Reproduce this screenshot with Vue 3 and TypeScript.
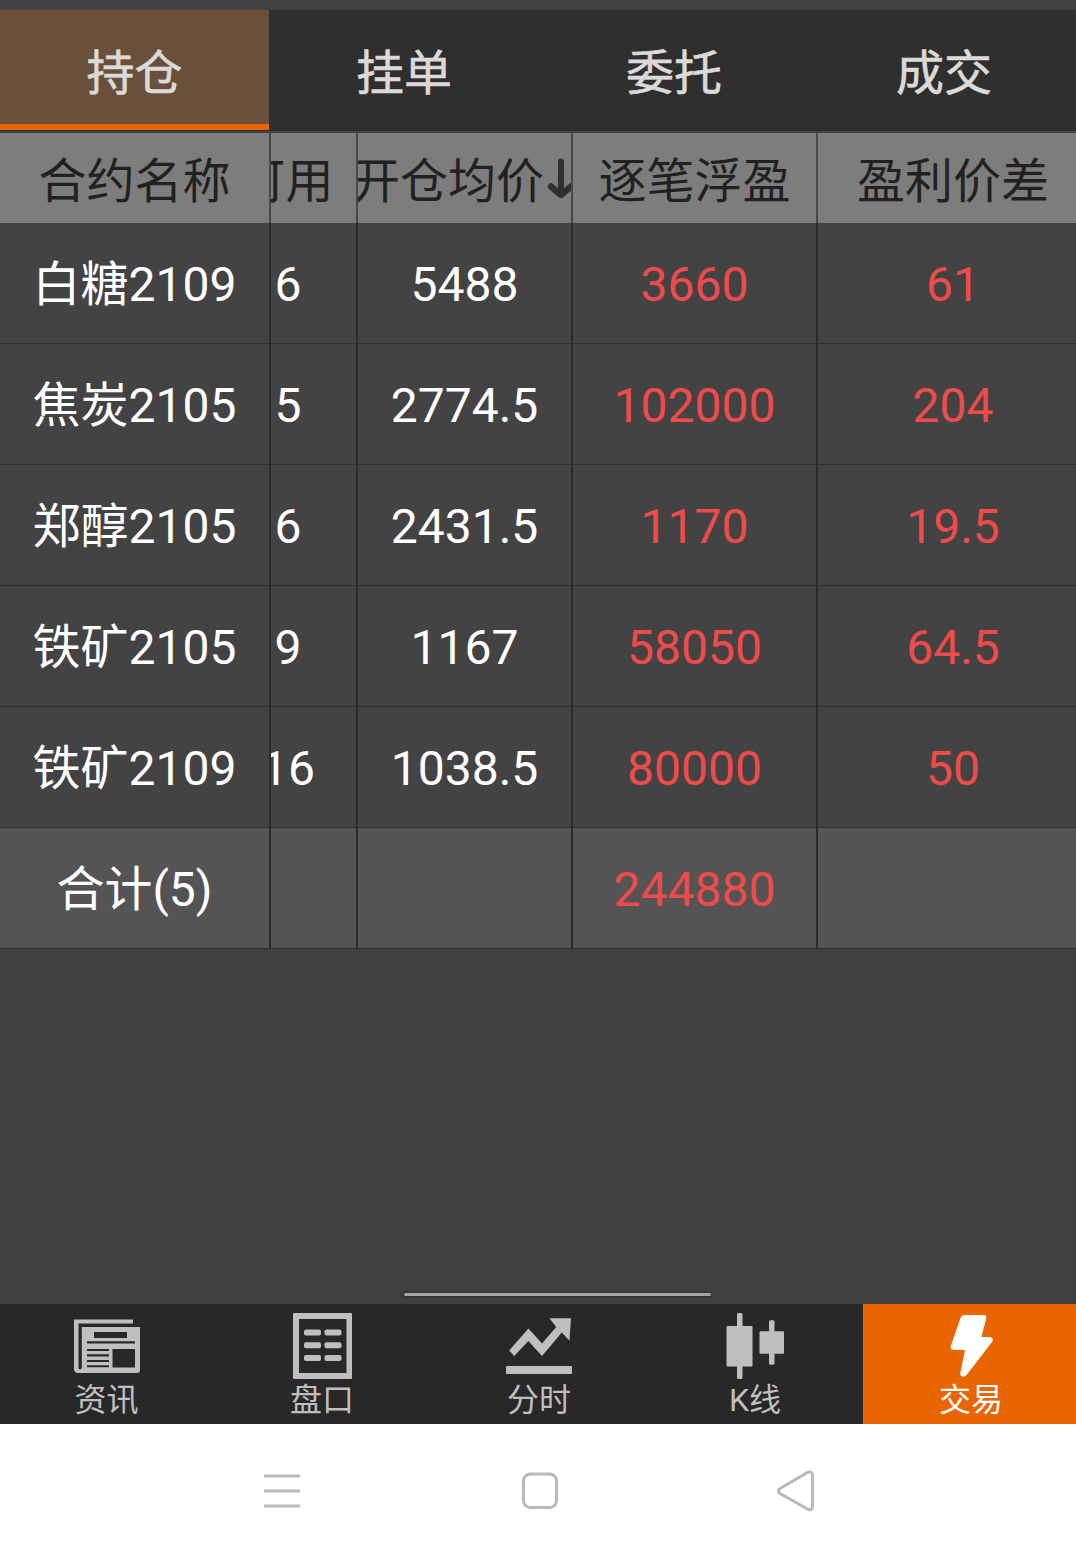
<script setup lang="ts">
const tabs: string[] = ['持仓', '挂单', '委托', '成交']

interface Row {
  name: string
  usable: string
  price: string
  profit: string
  spread: string
  total?: boolean
}

const rows: Row[] = [
  { name: '白糖2109', usable: '6', price: '5488', profit: '3660', spread: '61' },
  { name: '焦炭2105', usable: '5', price: '2774.5', profit: '102000', spread: '204' },
  { name: '郑醇2105', usable: '6', price: '2431.5', profit: '1170', spread: '19.5' },
  { name: '铁矿2105', usable: '9', price: '1167', profit: '58050', spread: '64.5' },
  { name: '铁矿2109', usable: '16', price: '1038.5', profit: '80000', spread: '50' },
  { name: '合计(5)', usable: '', price: '', profit: '244880', spread: '', total: true },
]
</script>

<template>
  <div class="screen">
    <nav class="tabs">
      <div v-for="(t, i) in tabs" :key="t" class="tab" :class="{ active: i === 0 }">{{ t }}</div>
    </nav>

    <section class="table">
      <div class="row head">
        <div class="cell"><span class="in">合约名称</span></div>
        <div class="cell usable"><span class="in">可用</span></div>
        <div class="cell">
          <span class="in sort">开仓均价
            <svg width="28" height="42" viewBox="0 0 28 42" fill="none" stroke="#303030" stroke-linecap="round" stroke-linejoin="round">
              <path d="M14 3.500V36" stroke-width="6" />
              <path d="M4 28.500L14 37L24 28.500" stroke-width="6.500" />
            </svg>
          </span>
        </div>
        <div class="cell"><span class="in">逐笔浮盈</span></div>
        <div class="cell last"><span class="in">盈利价差</span></div>
      </div>
      <div v-for="r in rows" :key="r.name" class="row" :class="{ total: r.total }">
        <div class="cell"><span class="in">{{ r.name }}</span></div>
        <div class="cell usable"><span class="in">{{ r.usable }}</span></div>
        <div class="cell"><span class="in">{{ r.price }}</span></div>
        <div class="cell red"><span class="in">{{ r.profit }}</span></div>
        <div class="cell red last"><span class="in">{{ r.spread }}</span></div>
      </div>
    </section>

    <div class="blank"><i class="handle"></i></div>

    <nav class="bottom">
      <div class="item">
        <svg width="72" height="72" viewBox="0 0 72 72" fill="#bfbfbf">
          <path d="M3 9.500H62V13.500H7.500V57.500Q7.500 59.500 9 59.500Q10.800 59.500 10.800 57.500V17H69V60Q69 63 66 63H7Q3 63 3 59Z" />
          <g fill="#282828">
            <path d="M23 22H56V28H23ZM16 31.300H64V33.600H16ZM16 39H38V41H16ZM16 44.300H38V46.500H16ZM16 50H38V52H16ZM16 55.300H38V57.300H16ZM41.500 39H64V57.500H41.500Z" />
          </g>
        </svg>
        <span>资讯</span>
      </div>
      <div class="item">
        <svg width="72" height="72" viewBox="0 0 72 72" fill="#bfbfbf">
          <path fill-rule="evenodd" d="M8 3H65Q66 3 66 4V68Q66 69 65 69H8Q7 69 7 68V4Q7 3 8 3ZM13 9V63H60.500V9Z" />
          <g>
            <rect x="18" y="19.500" width="17" height="6" rx="2" /><rect x="38.500" y="19.500" width="17" height="6" rx="2" />
            <rect x="18" y="32.300" width="17" height="6" rx="2" /><rect x="38.500" y="32.300" width="17" height="6" rx="2" />
            <rect x="18" y="45" width="17" height="6" rx="2" /><rect x="38.500" y="45" width="17" height="6" rx="2" />
          </g>
        </svg>
        <span>盘口</span>
      </div>
      <div class="item">
        <svg width="72" height="72" viewBox="0 0 72 72" fill="#bfbfbf">
          <path d="M6.200 40.500L25.400 18.500L39 33.500L53.200 17L46.500 8.200H68L66.500 30.700L58.800 22.500L39 46L25.400 31L11.200 46Z" />
          <rect x="3" y="56" width="66" height="8" rx="1" />
        </svg>
        <span>分时</span>
      </div>
      <div class="item">
        <svg width="72" height="72" viewBox="0 0 72 72" fill="#bfbfbf">
          <rect x="7.500" y="16" width="26" height="40.500" rx="1" /><rect x="18" y="3" width="5.500" height="66" rx="1.500" />
          <rect x="40.500" y="21.300" width="24.500" height="22.500" rx="1" /><rect x="50" y="10.300" width="5.500" height="44.500" rx="1.500" />
        </svg>
        <span>K线</span>
      </div>
      <div class="item on">
        <svg width="72" height="72" viewBox="0 0 72 72" fill="#fff">
          <path d="M32 5H50.500Q54 5 53.200 8.500L48.500 27H57Q61.500 28 59 32L34 64.500Q30 69 27 64.500L32 40H20.500Q17 39.500 17.800 36L27.500 8Q28.800 5 32 5Z" />
        </svg>
        <span>交易</span>
      </div>
    </nav>

    <footer class="system">
      <svg width="40" height="40" viewBox="0 0 40 40" stroke="#b9b9b9" stroke-width="3"><path d="M2 5H38M2 20H38M2 35H38" /></svg>
      <svg width="40" height="40" viewBox="0 0 40 40" fill="none" stroke="#b9b9b9" stroke-width="3"><rect x="4.500" y="3" width="33" height="33.500" rx="7" /></svg>
      <svg width="40" height="44" viewBox="0 0 40 44" fill="none" stroke="#b9b9b9" stroke-width="3"><path d="M4 19.500L31.500 3.500Q36.200 2 36.500 6V38Q36.200 42 31.500 40L4 24.500Q1 22 4 19.500Z" /></svg>
    </footer>
  </div>
</template>

<style>
body { margin: 0; background: #fff; }
</style>

<style scoped>
.screen {
  width: 1076px;
  height: 1556px;
  display: flex;
  flex-direction: column;
  overflow: hidden;
  background: #404040;
  font-family: Roboto, "Noto Sans CJK SC", sans-serif;
  font-size: 48px;
  color: #fff;
}
.tabs {
  flex: none;
  box-sizing: border-box;
  height: 133px;
  border-top: 10px solid #424242;
  border-bottom: 2px solid #434343;
  background: #2f2f2f;
  display: grid;
  grid-template-columns: 269px 270px 270px 270px;
}
.tab {
  box-sizing: border-box;
  height: 120px;
  padding-top: 5px;
  line-height: 117px;
  text-align: center;
  color: #dcdad8;
  -webkit-text-stroke: 0.6px #dcdad8;
}
.tab.active {
  background: #6a503b;
  border-bottom: 6px solid #e96500;
}
.table { flex: none; }
.row {
  box-sizing: border-box;
  height: 121px;
  display: grid;
  grid-template-columns: 271px 87px 215px 245px 258px;
  background: #434343;
  border-bottom: 1px solid #303030;
  line-height: 124px;
}
.head {
  height: 90px;
  border-bottom: 0;
  background: #7d7d7d;
  color: #212121;
  line-height: 98px;
}
.total { background: #545454; }
.cell {
  height: 100%;
  box-sizing: border-box;
  display: flex;
  overflow: hidden;
  white-space: nowrap;
  border-right: 2px solid #2b2b2b;
}
.row:not(.head) .cell { height: 121px; }
.head .cell { border-right-color: #484848; }
.cell.last { border-right: 0; }
.in {
  flex: 1;
  display: flex;
  justify-content: center;
}
.usable .in { margin-left: -51px; }
.head .usable .in { margin-left: -56px; }
.last .in { margin-right: -12px; }
.red { color: #f04b4b; }
.sort { align-items: flex-start; margin: 0 -9px 0 -11px; }
.sort svg { flex: none; margin: 25px 0 0 3px; }
.blank {
  flex: none;
  height: 355px;
  display: flex;
  justify-content: center;
  align-items: flex-end;
}
.handle {
  width: 307px;
  height: 3px;
  margin: 0 0 8px 38px;
  border-radius: 2px;
  background: #a3a3a3;
  box-shadow: 0 0 2px 1px #303030;
}
.bottom {
  flex: none;
  height: 120px;
  display: grid;
  grid-template-columns: 213px 218px 216px 216px 213px;
  background: #282828;
}
.item {
  display: flex;
  flex-direction: column;
  align-items: center;
  color: #bfbfbf;
  font-size: 32px;
  line-height: 36px;
}
.item svg { flex: none; margin: 6px 0 0; }
.on { padding-left: 3px; background: #e96500; color: #fff; }
.item.on svg { margin-left: -4px; }
.system {
  flex: 1;
  background: #fff;
  display: flex;
  justify-content: space-between;
  align-items: center;
  padding: 1px 260px 0 262px;
}
</style>
